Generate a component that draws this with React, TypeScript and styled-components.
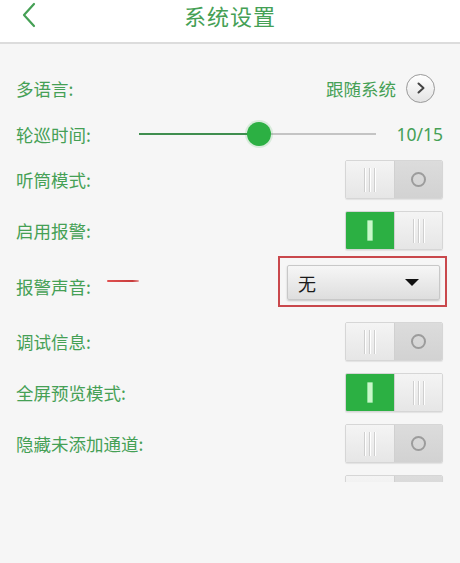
import React from 'react';
import styled, { createGlobalStyle } from 'styled-components';

// ─────────────────────────────────────────────────────────────────
// Global
// ─────────────────────────────────────────────────────────────────

const GlobalStyle = createGlobalStyle`
  html, body {
    margin: 0;
    padding: 0;
    background-color: #f6f6f6;
    font-family: "Noto Sans CJK SC", "Noto Sans", "Liberation Sans", sans-serif;
  }
  * {
    box-sizing: border-box;
  }
`;

const GREEN_TEXT = '#45a055';
const GREEN = '#2cb043';

// ─────────────────────────────────────────────────────────────────
// Styled Components
// ─────────────────────────────────────────────────────────────────

const Page = styled.div`
  width: 460px;
  height: 563px;
  background-color: #f6f6f6;
  overflow: hidden;
`;

const Header = styled.div`
  position: relative;
  height: 44px;
  display: flex;
  align-items: center;
  justify-content: center;
  background-color: #ffffff;
  border-bottom: 2px solid #dcdcdc;
`;

const BackButton = styled.button`
  position: absolute;
  left: 16px;
  top: 0;
  width: 26px;
  height: 30px;
  padding: 0;
  border: none;
  background: none;
  display: flex;
  align-items: center;
  justify-content: center;
`;

const Title = styled.h1`
  margin: 0 0 12px 0;
  font-size: 22px;
  font-weight: 400;
  color: ${GREEN_TEXT};
  letter-spacing: 1px;
`;

const Body = styled.div`
  height: 438px;
  padding-top: 18px;
  overflow: hidden;
`;

const Row = styled.div<{ $height: number; $alignTop?: boolean }>`
  height: ${(p) => p.$height}px;
  display: flex;
  align-items: ${(p) => (p.$alignTop ? 'flex-start' : 'center')};
  padding: 0 17px 0 16px;
`;

const Label = styled.span<{ $width?: number }>`
  font-size: 17.5px;
  color: ${GREEN_TEXT};
  white-space: nowrap;
  ${(p) => (p.$width ? `width: ${p.$width}px; flex-shrink: 0;` : '')}
`;

const RowLabel = styled(Label)`
  align-self: center;
`;

const Spacer = styled.div`
  flex: 1;
`;

const LinkText = styled.span`
  font-size: 17.5px;
  color: ${GREEN_TEXT};
  margin-right: 10px;
`;

const CircleArrow = styled.div`
  width: 29px;
  height: 29px;
  border-radius: 50%;
  border: 1px solid #9a9a9a;
  background: linear-gradient(#ffffff, #e4e4e4);
  display: flex;
  align-items: center;
  justify-content: center;
  margin-right: 8px;
`;

// Slider

const SliderTrack = styled.div`
  position: relative;
  flex: 1;
  height: 24px;
  display: flex;
  align-items: center;
`;

const TrackLine = styled.div`
  width: 100%;
  height: 2px;
  background-color: #c4c4c4;
`;

const TrackFill = styled.div`
  position: absolute;
  left: 0;
  top: 11px;
  height: 2px;
  background-color: #3f8e4f;
`;

const Thumb = styled.div`
  position: absolute;
  top: 0;
  width: 24px;
  height: 24px;
  margin-left: -11px;
  border-radius: 50%;
  background-color: ${GREEN};
  box-shadow: 0 0 0 2px rgba(44, 176, 67, 0.15);
`;

const SliderValue = styled.span`
  font-size: 17.5px;
  color: ${GREEN_TEXT};
  margin-left: 20px;
  font-family: "Noto Sans", "Liberation Sans", sans-serif;
`;

// Toggle

const ToggleBox = styled.div`
  width: 98px;
  height: 39px;
  display: flex;
  border: 1px solid #d6d6d6;
  border-radius: 2px;
  overflow: hidden;
  box-shadow: 0 1px 1px rgba(0, 0, 0, 0.08);
`;

const ToggleHalf = styled.div<{ $tone: 'light' | 'dark' | 'green' }>`
  flex: 1;
  display: flex;
  align-items: center;
  justify-content: center;
  gap: 4px;
  background: ${(p) =>
    p.$tone === 'green'
      ? GREEN
      : p.$tone === 'dark'
        ? 'linear-gradient(#dcdcdc, #d2d2d2)'
        : 'linear-gradient(#f4f4f4, #e6e6e6)'};
  & + & {
    border-left: 1px solid #d0d0d0;
  }
`;

const Grip = styled.span`
  width: 1px;
  height: 24px;
  background-color: #cfcfcf;
  box-shadow: 1px 0 0 #ffffff;
`;

const OnBar = styled.span`
  width: 6px;
  height: 21px;
  background-color: #c9f7c9;
  border: 1px solid #8fe09b;
  border-radius: 1px;
`;

const OffRing = styled.span`
  width: 15px;
  height: 15px;
  border-radius: 50%;
  border: 2px solid #9c9c9c;
`;

// Dropdown

const Marker = styled.span`
  position: relative;
  top: -5px;
  margin-left: 16px;
  width: 32px;
  height: 2px;
  align-self: center;
  background: linear-gradient(to right, #e05050, #c83c3c 80%, #e89a9a);
  border-radius: 1px;
`;

const Highlight = styled.div`
  margin-right: -4px;
  width: 169px;
  height: 51px;
  padding: 7px 5px 5px 7px;
  border: 2px solid #c9484c;
`;

const Select = styled.div`
  height: 35px;
  display: flex;
  align-items: center;
  justify-content: space-between;
  padding: 0 20px 0 10px;
  background: linear-gradient(#f6f6f6, #dedede);
  border: 1px solid #c8c8c8;
  border-radius: 2px;
  box-shadow: 0 1px 2px rgba(0, 0, 0, 0.2);
`;

const SelectText = styled.span`
  font-size: 18px;
  color: #1a1a1a;
`;

const Caret = styled.span`
  width: 0;
  height: 0;
  border-left: 7px solid transparent;
  border-right: 7px solid transparent;
  border-top: 7px solid #111111;
`;

// ─────────────────────────────────────────────────────────────────
// Parts
// ─────────────────────────────────────────────────────────────────

const Grips: React.FC = () => (
  <>
    <Grip />
    <Grip />
    <Grip />
  </>
);

const Toggle: React.FC<{ on: boolean }> = ({ on }) =>
  on ? (
    <ToggleBox>
      <ToggleHalf $tone="green">
        <OnBar />
      </ToggleHalf>
      <ToggleHalf $tone="light">
        <Grips />
      </ToggleHalf>
    </ToggleBox>
  ) : (
    <ToggleBox>
      <ToggleHalf $tone="light">
        <Grips />
      </ToggleHalf>
      <ToggleHalf $tone="dark">
        <OffRing />
      </ToggleHalf>
    </ToggleBox>
  );

const slider = { min: 5, max: 15, value: 10 };

const App: React.FC = () => {
  const pct = ((slider.value - slider.min) / (slider.max - slider.min)) * 100;

  return (
    <Page>
      <GlobalStyle />
      <Header>
        <BackButton>
          <svg width="16" height="26" viewBox="0 0 16 26" fill="none">
            <path d="M13 2 L3 13 L13 24" stroke={GREEN_TEXT} strokeWidth="2.2" strokeLinecap="round" strokeLinejoin="round" />
          </svg>
        </BackButton>
        <Title>系统设置</Title>
      </Header>

      <Body>
        <Row $height={52}>
          <Label>多语言:</Label>
          <Spacer />
          <LinkText>跟随系统</LinkText>
          <CircleArrow>
            <svg width="12" height="14" viewBox="0 0 12 14" fill="none">
              <path d="M3.5 2.5 L8.5 7 L3.5 11.5" stroke="#444" strokeWidth="2" strokeLinecap="round" strokeLinejoin="round" />
            </svg>
          </CircleArrow>
        </Row>

        <Row $height={40}>
          <Label $width={123}>轮巡时间:</Label>
          <SliderTrack>
            <TrackLine />
            <TrackFill style={{ width: `${pct}%` }} />
            <Thumb style={{ left: `${pct}%` }} />
          </SliderTrack>
          <SliderValue>
            {slider.value}/{slider.max}
          </SliderValue>
        </Row>

        <Row $height={51}>
          <Label>听筒模式:</Label>
          <Spacer />
          <Toggle on={false} />
        </Row>

        <Row $height={51}>
          <Label>启用报警:</Label>
          <Spacer />
          <Toggle on />
        </Row>

        <Row $height={60} $alignTop>
          <RowLabel>报警声音:</RowLabel>
          <Marker />
          <Spacer />
          <Highlight>
            <Select>
              <SelectText>无</SelectText>
              <Caret />
            </Select>
          </Highlight>
        </Row>

        <Row $height={51}>
          <Label>调试信息:</Label>
          <Spacer />
          <Toggle on={false} />
        </Row>

        <Row $height={51}>
          <Label>全屏预览模式:</Label>
          <Spacer />
          <Toggle on />
        </Row>

        <Row $height={51}>
          <Label>隐藏未添加通道:</Label>
          <Spacer />
          <Toggle on={false} />
        </Row>

        <Row $height={51}>
          <Spacer />
          <Toggle on={false} />
        </Row>
      </Body>
    </Page>
  );
};

export default App;
